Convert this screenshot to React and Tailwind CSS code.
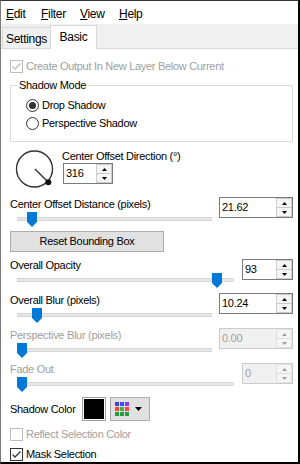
import React from "react";

function Check({ checked, disabled }) {
  const color = disabled ? "#bcbcbc" : "#333333";
  return (
    <svg width="13" height="13" viewBox="0 0 13 13" className="shrink-0">
      <rect x="0.5" y="0.5" width="12" height="12" fill="#ffffff" stroke={color} />
      {checked && <path d="M2.5 6.5 L5 9 L10.5 3.5" fill="none" stroke={color} strokeWidth="1.3" />}
    </svg>
  );
}

function Radio({ checked }) {
  return (
    <svg width="13" height="13" viewBox="0 0 13 13" className="shrink-0">
      <circle cx="6.5" cy="6.5" r="6" fill="#ffffff" stroke="#333333" />
      {checked && <circle cx="6.5" cy="6.5" r="3.5" fill="#333333" />}
    </svg>
  );
}

function SpinBox({ value, className, disabled }) {
  return (
    <div
      className={`flex h-[21px] border ${
        disabled ? "border-[#cccccc] bg-[#f0f0f0]" : "border-[#7a7a7a] bg-white"
      } ${className}`}
    >
      <div className={`flex-1 pl-[2px] leading-[19px] ${disabled ? "text-[#a0a0a0]" : "text-black"}`}>{value}</div>
      <div className="flex w-[16px] flex-col">
        <div className={`flex h-[10px] items-center justify-center border ${disabled ? "border-[#e0e0e0]" : "border-[#cccccc]"} bg-[#f5f5f5]`}>
          <svg width="5" height="3" viewBox="0 0 5 3">
            <path d="M0 3 L2.5 0 L5 3 Z" fill={disabled ? "#a0a0a0" : "#000000"} />
          </svg>
        </div>
        <div className={`flex h-[9px] items-center justify-center border border-t-0 ${disabled ? "border-[#e0e0e0]" : "border-[#cccccc]"} bg-[#f5f5f5]`}>
          <svg width="5" height="3" viewBox="0 0 5 3">
            <path d="M0 0 L5 0 L2.5 3 Z" fill={disabled ? "#a0a0a0" : "#000000"} />
          </svg>
        </div>
      </div>
    </div>
  );
}

function Slider({ className, thumb }) {
  return (
    <div className={`relative ml-[7px] h-[16px] ${className}`}>
      <div className="absolute left-0 right-0 top-[6px] h-[4px] border border-[#d6d6d6] bg-[#e7e7e7]" />
      <svg width="10" height="15" viewBox="0 0 10 15" className={`absolute top-[1px] ${thumb}`}>
        <path d="M0 0 H10 V10 L5 15 L0 10 Z" fill="#0078d7" />
      </svg>
    </div>
  );
}

function SliderBlock({ label, value, disabled, track, thumb, spin, className }) {
  return (
    <div className={`flex justify-between ${className}`}>
      <div className="flex flex-col">
        <div className={`h-[14px] leading-[14px] ${disabled ? "text-[#a0a0a0]" : "text-black"}`}>{label}</div>
        <Slider className={track} thumb={thumb} />
      </div>
      <SpinBox value={value} disabled={disabled} className={spin} />
    </div>
  );
}

export default function App() {
  return (
    <div className="flex h-[464px] w-[300px] flex-col overflow-hidden border-b-2 border-l border-r-2 border-t border-b-black border-l-[#7a7a7a] border-r-black border-t-[#333333] bg-white font-['Liberation_Sans',Arial,sans-serif] text-[11px] tracking-[-0.3px] text-black">
      {/* menu */}
      <div className="flex h-[23px] items-center pl-[5px] pt-[3px] text-[12px]">
        <span className="w-[35px]"><span className="underline">E</span>dit</span>
        <span className="w-[39px]"><span className="underline">F</span>ilter</span>
        <span className="w-[39px]"><span className="underline">V</span>iew</span>
        <span><span className="underline">H</span>elp</span>
      </div>

      {/* tabs */}
      <div className="flex h-[25px] items-end border-b border-[#d9d9d9] bg-[#f0f0f0] pl-[1px] text-[12px]">
        <div className="flex h-[21px] w-[49px] items-center justify-center border border-b-0 border-[#d9d9d9] bg-[#f0f0f0] pt-[2px]">
          Settings
        </div>
        <div className="relative z-10 -mb-[1px] -ml-[1px] flex h-[24px] w-[47px] items-center justify-center border border-b-0 border-[#d9d9d9] bg-white pb-[1px]">
          Basic
        </div>
      </div>

      {/* content */}
      <div className="flex flex-col pl-[9px] pr-[5px]">
        <div className="mt-[11px] flex h-[13px] items-center gap-[3px] text-[#a0a0a0]">
          <Check checked disabled />
          <span className="leading-[13px]">Create Output In New Layer Below Current</span>
        </div>

        <div className="relative mt-[12px] h-[57px] border border-[#dcdcdc] pl-[15px] pt-[13px]">
          <span className="absolute -top-[8px] left-[6px] bg-white px-[2px] leading-[14px]">Shadow Mode</span>
          <div className="flex h-[13px] items-center gap-[3px]">
            <Radio checked />
            <span>Drop Shadow</span>
          </div>
          <div className="mt-[5px] flex h-[13px] items-center gap-[3px]">
            <Radio />
            <span>Perspective Shadow</span>
          </div>
        </div>

        <div className="mt-[7px] flex h-[41px]">
          <svg width="40" height="41" viewBox="0 0 40 41" className="ml-[5px]">
            <circle cx="19.5" cy="20" r="18" fill="none" stroke="#333333" strokeWidth="1.4" />
            <line x1="20" y1="20" x2="33" y2="33" stroke="#333333" strokeWidth="1.4" />
            <circle cx="33.3" cy="33.3" r="3" fill="#111111" />
          </svg>
          <div className="ml-[7px] flex flex-col">
            <div className="h-[14px] leading-[14px]">Center Offset Direction (°)</div>
            <SpinBox value="316" className="ml-[1px] w-[50px]" />
          </div>
        </div>

        <SliderBlock
          className="mt-[7px]"
          label="Center Offset Distance (pixels)"
          value="21.62"
          track="w-[195px]"
          thumb="left-[10px]"
          spin="w-[74px]"
        />

        <div className="mt-[4px] flex h-[21px] w-[154px] items-center justify-center border border-[#adadad] bg-[#e1e1e1]">
          Reset Bounding Box
        </div>

        <SliderBlock
          className="mt-[6px]"
          label="Overall Opacity"
          value="93"
          track="w-[217px]"
          thumb="left-[195px]"
          spin="mt-[1px] w-[51px]"
        />

        <SliderBlock
          className="mt-[5px]"
          label="Overall Blur (pixels)"
          value="10.24"
          track="w-[195px]"
          thumb="left-[15px]"
          spin="w-[74px]"
        />

        <SliderBlock
          className="mt-[5px]"
          label="Perspective Blur (pixels)"
          value="0.00"
          disabled
          track="w-[195px]"
          thumb="left-0"
          spin="w-[74px]"
        />

        <SliderBlock
          className="mt-[4px]"
          label="Fade Out"
          value="0"
          disabled
          track="w-[217px]"
          thumb="left-0"
          spin="mt-[1px] w-[51px]"
        />

        <div className="mt-[5px] flex h-[24px] items-center">
          <span className="w-[72px]">Shadow Color</span>
          <div className="h-[24px] w-[24px] border border-[#a0a0a0] bg-white p-[1px]">
            <div className="h-full w-full bg-black" />
          </div>
          <div className="ml-[4px] flex h-[24px] w-[40px] items-center border border-[#adadad] bg-[#e1e1e1] pl-[4px]">
            <div className="grid grid-cols-3 gap-[1px]">
              <div className="h-[4px] w-[4px] bg-[#3f48cc]" />
              <div className="h-[4px] w-[4px] bg-[#3f48ff]" />
              <div className="h-[4px] w-[4px] bg-[#8040ff]" />
              <div className="h-[4px] w-[4px] bg-[#ff4040]" />
              <div className="h-[4px] w-[4px] bg-[#40b040]" />
              <div className="h-[4px] w-[4px] bg-[#ff4040]" />
              <div className="h-[4px] w-[4px] bg-[#22a040]" />
              <div className="h-[4px] w-[4px] bg-[#22a040]" />
              <div className="h-[4px] w-[4px] bg-[#22a040]" />
            </div>
            <svg width="7" height="4" viewBox="0 0 7 4" className="ml-[6px]">
              <path d="M0 0 H7 L3.5 4 Z" fill="#000000" />
            </svg>
          </div>
        </div>

        <div className="mt-[7px] flex h-[13px] items-center gap-[3px] text-[#a0a0a0]">
          <Check disabled />
          <span>Reflect Selection Color</span>
        </div>

        <div className="mt-[7px] flex h-[13px] items-center gap-[3px]">
          <Check checked />
          <span>Mask Selection</span>
        </div>
      </div>
    </div>
  );
}
